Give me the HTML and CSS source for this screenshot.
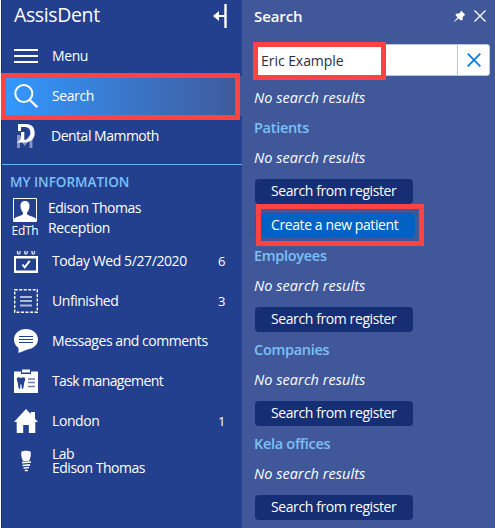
FILE: index.html
```html
<!DOCTYPE html>
<html lang="en">
<head>
<meta charset="utf-8">
<title>AssisDent</title>
<link rel="stylesheet" href="styles.css">
</head>
<body>
<div class="app">
  <nav class="sidebar">
    <header class="brand">
      <span class="brand-name">AssisDent</span>
      <svg class="collapse" width="14" height="24" viewBox="0 0 14 24"><path d="M12.500 0v24" stroke="#fff" stroke-width="2.400"/><path d="M3 12h9" stroke="#fff" stroke-width="2"/><path d="M0 12l6-5v10z" fill="#fff"/></svg>
    </header>
    <a class="row">
      <svg class="icon" viewBox="0 0 24 24"><path d="M0 6h24M0 12h24M0 18h24" stroke="#fff" stroke-width="2"/></svg>
      <span class="label">Menu</span>
    </a>
    <a class="row active">
      <svg class="icon" viewBox="0 0 24 24"><circle cx="9.800" cy="9.500" r="8.500" fill="none" stroke="#fff" stroke-width="2"/><path d="M15.800 16l7.500 7.200" stroke="#fff" stroke-width="2.200"/></svg>
      <span class="label">Search</span>
    </a>
    <a class="row">
      <svg class="icon" viewBox="0 0 24 24"><path d="M3 24V11h3l4.700 6.500L15.500 11h3v13h-3v-8l-4.800 6L6 16v8z" fill="#8493c0"/><path d="M4 0h8c6 0 8.700 3.800 8.700 9 0 6-4.200 9.500-10.200 9.500H2.500c3.200-1.500 4.500-3 4.500-6V8h3.300v8c4-.5 6-3 6-7 0-4-2-6-6-6H7v4H4z" fill="#fff"/></svg>
      <span class="label dental">Dental Mammoth</span>
    </a>
    <section class="info">
      <h2 class="info-title">MY INFORMATION</h2>
      <div class="user">
        <div class="avatar">
          <svg class="icon" viewBox="0 0 24 24"><path d="M.5.500h23v23H.5z" fill="none" stroke="#fff"/><path d="M12 3c3.100 0 4.700 2.200 4.500 5.300-.2 3-1 4.600-2.400 6v2c1 1.600 6.900 2 8.900 4.700v2H1v-2c2-2.700 7.900-3.100 8.900-4.700v-2c-1.400-1.400-2.200-3-2.400-6C7.300 5.200 8.900 3 12 3z" fill="#fff"/></svg>
          <span class="initials">EdTh</span>
        </div>
        <div class="user-text"><span>Edison Thomas</span><span class="role">Reception</span></div>
      </div>
      <a class="row">
        <svg class="icon" viewBox="0 0 24 24"><path d="M0 7h24v17H0z" fill="#fff"/><path d="M2 9.500h20v12H2z" fill="#23408e"/><path d="M3.500 2v1.500q0 1.500 1.200 1.500T6 3.500V2M10.700 2v1.500q0 1.500 1.200 1.500t1.300-1.500V2M18 2v1.500q0 1.500 1.200 1.500t1.300-1.500V2" fill="none" stroke="#d5dbea" stroke-width="1.400"/><path d="M8.500 15.500l2.200 2.800 5-6.500" fill="none" stroke="#fff" stroke-width="2"/></svg>
        <span class="label">Today Wed 5/27/2020</span><span class="count">6</span>
      </a>
      <a class="row">
        <svg class="icon" viewBox="0 0 24 24"><path d="M.7.700h22.600v22.600H.7z" fill="none" stroke="#fff" stroke-width="1.400" stroke-dasharray="3 1.500"/><path d="M6 8h12" stroke="#e0e4ef" stroke-width="1.500"/><path d="M6 12h12M6 16.500h12" stroke="#aeb9d6" stroke-width="2"/></svg>
        <span class="label unfinished">Unfinished</span><span class="count">3</span>
      </a>
      <a class="row">
        <svg class="icon" viewBox="0 0 24 24"><path d="M12 0c6.600 0 12 4.300 12 10.300 0 5.800-5.300 9.700-10.500 10.200L4.500 24v-5C1.500 17 0 14 0 10.300 0 4.300 5.400 0 12 0z" fill="#fff"/><path d="M5 7.500h14M5 10.500h14M5 13.500h14" stroke="#23408e" stroke-width="1.200"/></svg>
        <span class="label messages">Messages and comments</span>
      </a>
      <a class="row">
        <svg class="icon" viewBox="0 0 24 24"><path d="M0 2.500h24V24H0z" fill="#fff"/><path d="M7 0h10v5H7z" fill="#23408e"/><path d="M8 .5h8v3H8z" fill="#fff"/><path d="M3 9c1-1.500 3-.7 4 0 1-.7 3-1.500 4 0 .8 2-.8 3.500-1 6-.2 2-.5 5-1.700 5C7.300 20 8 15 7 15s-.3 5-1.300 5C4.500 20 4.200 17 4 15c-.2-2.500-1.800-4-1-6z" fill="#23408e"/><path d="M14 10h7M14 13.500h7M14 17.500h7" stroke="#6b7faf" stroke-width="1.500"/></svg>
        <span class="label task">Task management</span>
      </a>
      <a class="row">
        <svg class="icon" viewBox="0 0 24 24"><path d="M0 13L12 0l4.700 5V3H21v6.700l3 3.300h-2.700v11h-6.500v-8H9.200v8H2.700V13z" fill="#fff"/></svg>
        <span class="label">London</span><span class="count">1</span>
      </a>
      <a class="row">
        <svg class="icon" viewBox="0 0 24 24"><path d="M7.500 2.500c2-1 7-1 9 0 .8 3 .2 6-1.500 9.500H9C7.300 8.500 6.700 5.500 7.500 2.500z" fill="#fff"/><path d="M8 13.700l9-.7M8.500 16.500l7.500-.7M9.500 19l5.500-.5M10.800 21.500h3" stroke="#fff" stroke-width="1.700"/></svg>
        <span class="label two-lines">Lab<br>Edison Thomas</span>
      </a>
    </section>
    <div class="mark mark-nav"></div>
  </nav>
  <main class="panel">
    <header class="panel-head">
      <h1 class="panel-title">Search</h1>
      <svg class="pin" width="12" height="12" viewBox="0 0 12 12"><path d="M7 .5L11.500 5 10 5.500 8.700 7.200 8.500 10 7 10.500 4.500 8.500.5 11.800 0 11.500 3.500 7.500 1.500 5 2 3.700 5 3.500 6.600 2z" fill="#fff"/></svg>
      <svg width="12" height="12" viewBox="0 0 12 12"><path d="M.5.500l11 11M11.500.500l-11 11" stroke="#fff" stroke-width="1.300"/></svg>
    </header>
    <div class="field">
      <span class="value">Eric Example</span>
      <span class="clear"><svg width="14" height="14" viewBox="0 0 14 14"><path d="M.7.700l12.600 12.600M13.300.700L.7 13.300" stroke="#0f7fe5" stroke-width="1.900"/></svg></span>
    </div>
    <p class="empty">No search results</p>
    <section class="group patients">
      <h2 class="group-title">Patients</h2>
      <p class="empty">No search results</p>
      <div class="button">Search from register</div>
      <div class="button create">Create a new patient</div>
    </section>
    <section class="group">
      <h2 class="group-title">Employees</h2>
      <p class="empty">No search results</p>
      <div class="button">Search from register</div>
    </section>
    <section class="group">
      <h2 class="group-title">Companies</h2>
      <p class="empty">No search results</p>
      <div class="button">Search from register</div>
    </section>
    <section class="group">
      <h2 class="group-title">Kela offices</h2>
      <p class="empty">No search results</p>
      <div class="button">Search from register</div>
    </section>
    <div class="mark mark-query"></div>
    <div class="mark mark-create"></div>
  </main>
</div>
</body>
</html>
```
FILE: styles.css
```css
* { box-sizing: border-box; }
body { margin: 0; background: #fff; font-family: "Open Sans", "Noto Sans", sans-serif; font-size: 14px; color: #fff; overflow: hidden; }
h1, h2, p { margin: 0; font-size: inherit; }
.app { display: flex; width: 495px; height: 528px; padding-left: 1px; }
.sidebar { position: relative; width: 241px; flex: none; background: #23408e; border-left: 1px solid #183052; }
.brand { height: 36px; padding: 0 15px 4px 12px; display: flex; align-items: center; justify-content: space-between; }
.brand-name { font-size: 19.5px; line-height: 30px; letter-spacing: -.38px; margin-bottom: 2px; }
.row { height: 40px; display: flex; align-items: center; padding: 0 17px 0 12px; letter-spacing: -.4px; }
.icon { width: 24px; height: 24px; display: block; flex: none; }
.label { margin-left: 14px; line-height: 20px; flex: 1; white-space: nowrap; }
.active { background: linear-gradient(90deg, #3399ff, #405899); }
.dental { margin-left: 13px; letter-spacing: -.5px; }
.unfinished { letter-spacing: -.45px; }
.messages { letter-spacing: -.45px; }
.task { letter-spacing: -.6px; }
.count { font-size: 13px; }
.info { border-top: 1px solid #69b5f4; margin-top: 8px; }
.info-title { margin: 7px 0 0 8px; height: 20px; line-height: 20px; font-size: 13.5px; font-weight: 600; color: #7cc0fb; letter-spacing: 0; }
.user { display: flex; height: 49px; padding: 6px 0 0 9px; }
.avatar { width: 28px; display: flex; flex-direction: column; align-items: center; }
.initials { font-size: 12px; line-height: 17px; letter-spacing: -.3px; }
.user-text { display: flex; flex-direction: column; margin-left: 9px; line-height: 20px; letter-spacing: -.5px; }
.role { letter-spacing: -.35px; }
.two-lines { line-height: 14px; letter-spacing: -.5px; }
.panel { position: relative; flex: 1; background: #405899; padding: 0 5px 0 11px; }
.panel-head { height: 44px; display: flex; align-items: center; padding: 0 4px 12px 1px; }
.panel-title { flex: 1; font-weight: 600; font-size: 15px; letter-spacing: -.1px; }
.pin { margin-right: 8px; }
.field { height: 32px; display: flex; background: #fff; border: 1px solid #b8cada; border-radius: 3px; color: #273142; }
.value { flex: 1; padding-left: 7px; line-height: 31px; letter-spacing: -.05px; }
.clear { width: 32px; border-left: 1px solid #b8cada; display: flex; align-items: center; justify-content: center; }
.empty { height: 20px; line-height: 20px; font-size: 14.5px; font-style: italic; letter-spacing: .05px; padding-left: 1px; }
.field + .empty { margin-top: 12px; }
.group { height: 94px; padding-left: 1px; }
.patients { height: 128px; margin-top: 10px; }
.group-title { height: 20px; line-height: 20px; font-size: 14.5px; font-weight: 600; color: #7cc0f7; letter-spacing: -.3px; }
.group .empty { padding: 0; margin-top: 10px; }
.button { width: 158px; height: 25px; margin: 11px 0 0 1px; padding-left: 16px; border-radius: 4px; background: #162e73; line-height: 23px; letter-spacing: -.4px; white-space: nowrap; }
.create { width: 160px; margin-top: 9px; background: #0063c4; }
.mark { position: absolute; border: 5px solid #ff4343; }
.mark-nav { left: -1px; top: 73px; width: 239px; height: 47px; }
.mark-query { left: 11px; top: 42px; width: 133px; height: 38px; }
.mark-create { left: 14px; top: 204px; width: 168px; height: 42px; }
```
